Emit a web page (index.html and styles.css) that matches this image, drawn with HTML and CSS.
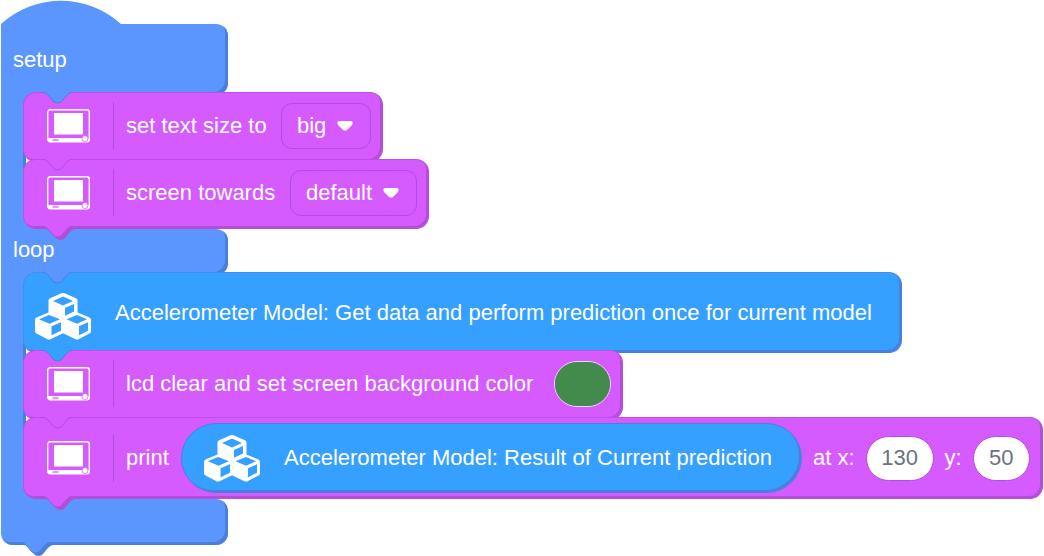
FILE: index.html
```html
<!DOCTYPE html>
<html lang="en">
<head>
<meta charset="utf-8">
<title>Block program</title>
<link rel="stylesheet" href="styles.css">
</head>
<body>
<svg class="defs" aria-hidden="true">
  <symbol id="screen" viewBox="0 0 43 34">
    <rect class="ink-line" x="0.700" y="0.700" width="41.600" height="32" rx="2.500"/>
    <rect class="ink" x="7" y="4" width="29" height="21.500"/>
    <path class="ink" d="M1 29H42V31Q42 33 40 33H3Q1 33 1 31Z"/>
    <circle class="knob" cx="38" cy="29.500" r="3"/>
    <path class="cut" d="M5.500 31H11.500"/>
  </symbol>
  <symbol id="cubes" viewBox="0 0 56 47">
    <path class="ink" fill-rule="evenodd" d="M26.500 0.300Q28 -0.300 29.500 0.300L41 5.200Q42.500 6 42.500 7.500V19.500L54.500 24.500Q56 25.200 56 27V38Q56 39.600 54.500 40.400L43.500 46.300Q42 47 40.500 46.300L28 40.300L15.500 46.300Q14 47 12.500 46.300L1.500 40.400Q0 39.600 0 38V27Q0 25.200 1.500 24.500L13.500 19.500V7.500Q13.500 6 15 5.200Z
      M18 8L28 3.500L38 8L28 12.500Z M30 15L39 11V18.500L30 22.800Z
      M4 26.300L14 22L25 26.300L14.500 30.700Z M16.500 33.300L26 29.300V37.800L16.500 42.300Z
      M31.500 26.300L42 22L52 26.300L42 30.700Z M44 33.300L53 29.300V37.800L44 42.300Z"/>
  </symbol>
  <symbol id="nub" viewBox="0 0 38 16">
    <path class="nub-shade" d="M3 3C6 3 8 5 10 7L14 12C16 14.500 21 14.500 23 12L27 7C29 5 31 3 34 3V0H3Z"/>
    <path class="nub-face" d="M0 0C3 0 5 2 7 4L11 9C13 11.500 18 11.500 20 9L24 4C26 2 28 0 31 0Z"/>
    <path class="nub-edge" d="M0 0C3 0 5 2 7 4L11 9C13 11.500 18 11.500 20 9L24 4C26 2 28 0 31 0"/>
  </symbol>
</svg>

<main class="program">
  <svg class="hat" viewBox="0 0 120 24" aria-hidden="true"><path d="M0 24C35 -7 85 -7 120 24Z"/></svg>
  <div class="arm arm-setup"><span>setup</span><svg class="nub"><use href="#nub"/></svg></div>
  <div class="stack">
    <div class="block lcd">
      <svg class="screen"><use href="#screen"/></svg><i class="rule"></i>
      <label class="size-label" for="size">set text size to</label>
      <span class="picker"><select id="size"><option>big</option></select><svg class="arrow" viewBox="0 0 16 10"><path d="M3 0H13C16 0 16 2 15 4L10 9Q8 10 6 9L1 4C0 2 0 0 3 0Z"/></svg></span>
      <svg class="nub"><use href="#nub"/></svg>
    </div>
    <div class="block lcd">
      <svg class="screen"><use href="#screen"/></svg><i class="rule"></i>
      <label class="towards-label" for="towards">screen towards</label>
      <span class="picker"><select id="towards"><option>default</option></select><svg class="arrow" viewBox="0 0 16 10"><path d="M3 0H13C16 0 16 2 15 4L10 9Q8 10 6 9L1 4C0 2 0 0 3 0Z"/></svg></span>
      <svg class="nub"><use href="#nub"/></svg>
    </div>
  </div>
  <div class="arm arm-loop"><span>loop</span><svg class="nub"><use href="#nub"/></svg></div>
  <div class="stack">
    <div class="block model">
      <svg class="cubes"><use href="#cubes"/></svg>
      <span class="model-label">Accelerometer Model: Get data and perform prediction once for current model</span>
      <svg class="nub"><use href="#nub"/></svg>
    </div>
    <div class="block lcd">
      <svg class="screen"><use href="#screen"/></svg><i class="rule"></i>
      <label class="color-label" for="color">lcd clear and set screen background color</label>
      <input class="swatch" id="color" type="color" value="#438b4c">
      <svg class="nub"><use href="#nub"/></svg>
    </div>
    <div class="block lcd tall">
      <svg class="screen"><use href="#screen"/></svg><i class="rule"></i>
      <span class="print-label">print</span>
      <span class="reporter"><svg class="cubes"><use href="#cubes"/></svg><span class="result-label">Accelerometer Model: Result of Current prediction</span></span>
      <label for="x">at x:</label>
      <input class="number wide" id="x" type="text" value="130">
      <label for="y">y:</label>
      <input class="number" id="y" type="text" value="50">
      <svg class="nub"><use href="#nub"/></svg>
    </div>
  </div>
  <div class="arm arm-foot"><svg class="nub"><use href="#nub"/></svg></div>
</main>
</body>
</html>
```

FILE: styles.css
```css
* { box-sizing: border-box; }

body {
  margin: 0;
  background: #fff;
  color: #fff;
  font: 22px/28px "Liberation Sans", Arial, sans-serif;
}

.defs { position: absolute; width: 0; height: 0; }

.program {
  --frame: #5b96ff;
  --frame-dark: #4a80db;
  display: flex;
  flex-direction: column;
  align-items: flex-start;
  padding: 0 1px 11px;
  white-space: nowrap;
}

.hat { display: block; width: 120px; height: 24px; fill: var(--frame); }

.arm, .block { position: relative; display: flex; align-items: center; }

.arm {
  --face: var(--frame);
  --dark: var(--frame-dark);
  width: 227px;
  margin-bottom: -3px;
  padding-left: 12px;
  background: var(--face);
  box-shadow: inset -3px -3px var(--dark);
  border-radius: 0 12px 12px 0;
}
.arm-setup { height: 71px; }
.arm-loop { height: 46px; padding-bottom: 4px; }
.arm-foot { height: 46px; margin: 0; border-radius: 0 12px 12px 12px; }

.stack {
  position: relative;
  z-index: 1;
  display: flex;
  flex-direction: column;
  align-items: flex-start;
  border-left: 22px solid var(--frame);
  background:
    linear-gradient(var(--frame), var(--frame)) left top / 24px 14px no-repeat,
    linear-gradient(var(--frame), var(--frame)) left bottom / 24px 14px no-repeat,
    linear-gradient(var(--frame-dark), var(--frame-dark)) left / 3px 100% no-repeat;
}

.block {
  min-height: 70px;
  gap: 11px;
  margin-bottom: -3px;
  padding: 0 11px 3px 23px;
  background: var(--face);
  border: 1px solid var(--edge);
  border-right-color: var(--dark);
  border-bottom-color: var(--dark);
  border-radius: 13px;
  box-shadow: inset -2px -2px var(--dark);
}
.block:last-child { margin-bottom: 0; }

.lcd { --face: #d65bff; --dark: #b44dd8; --edge: #c04fe6; }
.model { --face: #35a0ff; --dark: #4a80db; --edge: #4090ee; }
.model { min-height: 81px; gap: 24px; padding: 0 12px 0 11px; }
.tall { min-height: 82px; padding: 0 12px 0 23px; }

.size-label { min-width: 144px; }
.towards-label { min-width: 153px; }
.color-label { min-width: 417px; }
.model-label { min-width: 774px; }
.print-label { min-width: 44px; }
.result-label { min-width: 499px; }

.ink { fill: #fff; }
.ink-line { fill: none; stroke: #fff; stroke-width: 1.400; }
.cut { fill: none; stroke: #d65bff; stroke-width: 1.300; }
.knob { fill: #fff; stroke: #d65bff; stroke-width: 0.800; }

.screen { flex: none; width: 43px; height: 34px; margin-right: 12px; }
.rule { width: 1px; height: 47px; margin-right: 1px; background: var(--dark); }
.cubes { flex: none; width: 56px; height: 47px; }
.block > .cubes { margin-top: 8px; }

.nub { position: absolute; z-index: 2; width: 38px; height: 16px; }
.nub-face { fill: var(--face); }
.nub-edge { fill: none; stroke: var(--dark); stroke-width: 1; }
.nub-shade { fill: var(--shade, none); }
.block > .nub { left: 18px; bottom: -14px; }
.block:last-child > .nub, .arm-foot .nub { --shade: var(--dark); }
.arm .nub { z-index: 3; left: 41px; bottom: -13px; }
.arm-foot .nub { left: 19px; }

.picker { position: relative; display: flex; align-items: center; }
.picker select {
  appearance: none;
  height: 46px;
  padding: 0 43px 0 15px;
  color: inherit;
  font: inherit;
  background: transparent;
  border: 1px solid var(--dark);
  border-radius: 11px;
}
.arrow { position: absolute; right: 18px; width: 16px; height: 10px; fill: #fff; pointer-events: none; }

.swatch {
  appearance: none;
  width: 57px;
  height: 46px;
  padding: 0;
  overflow: hidden;
  background: #438b4c;
  border: 1px solid #eadcf0;
  border-radius: 23px;
}
.swatch::-webkit-color-swatch-wrapper { padding: 0; }
.swatch::-webkit-color-swatch { border: 0; }

.reporter {
  --dark: #4a80db;
  display: flex;
  align-items: center;
  gap: 24px;
  height: 70px;
  padding: 0 18px 0 22px;
  background: #35a0ff;
  border: 1px solid var(--dark);
  border-radius: 35px;
  box-shadow: inset -2px -2px var(--dark);
}

.number {
  width: 57px;
  height: 45px;
  padding: 0;
  color: #6b7280;
  font: inherit;
  text-align: center;
  background: #fff;
  border: 1px solid var(--dark);
  border-radius: 23px;
}
.wide { width: 68px; }
```
